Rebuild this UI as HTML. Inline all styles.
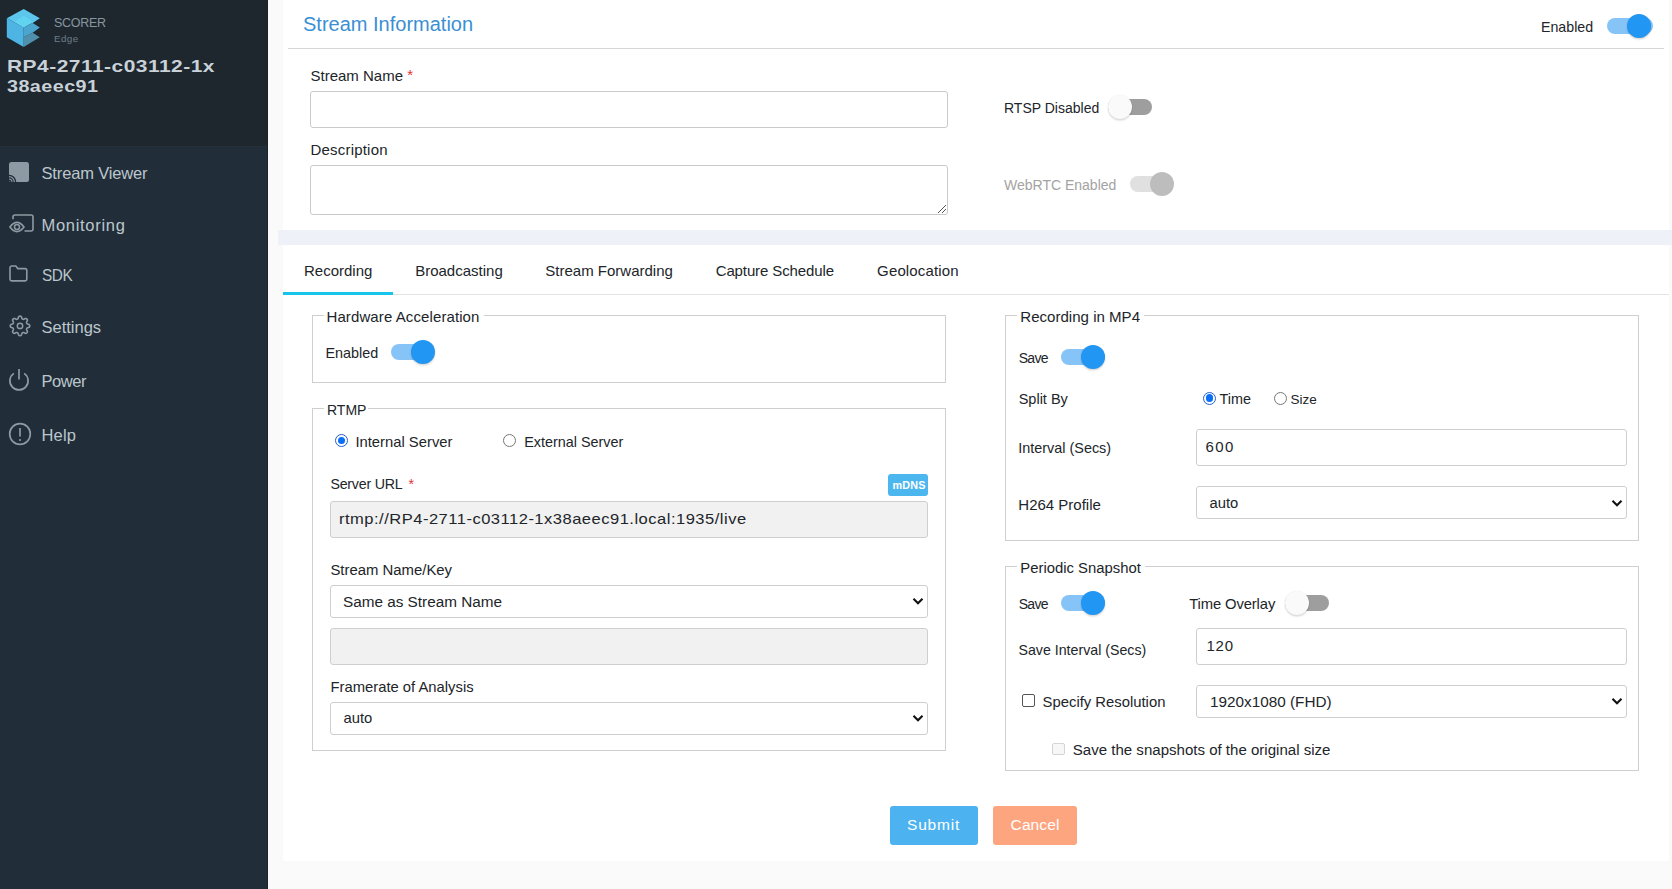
<!DOCTYPE html>
<html><head><meta charset="utf-8"><title>Stream Information</title>
<style>
html,body{margin:0;padding:0;width:1672px;height:889px;overflow:hidden;background:#fafafa;}
body{position:relative;font-family:"Liberation Sans",sans-serif;}
.t{position:absolute;white-space:nowrap;line-height:1;font-family:"Liberation Sans",sans-serif;}
.r{position:absolute;box-sizing:border-box;}
svg.r{overflow:visible;}
</style></head><body>
<div class="r" style="left:0px;top:0px;width:268px;height:889px;background:#212e39;"></div>
<div class="r" style="left:0px;top:0px;width:268px;height:146px;background:#1e272e;"></div>
<div class="r" style="left:0px;top:146px;width:268px;height:1px;background:#24313b;"></div>
<div class="r" style="left:267px;top:0px;width:1px;height:889px;background:#1a232a;"></div>
<svg class="r" style="left:6px;top:8px" width="36" height="40" viewBox="6 8 36 40">
<polygon points="23.7,9 39.8,18.3 32.7,23 23.7,27.6 6.8,18.3" fill="#5cc6ec"/>
<polygon points="6.8,18.3 23.7,27.6 23.7,47 6.8,37.3" fill="#4db4e4"/>
<polygon points="23.7,15.8 32.7,21.7 23.7,27.6 14.4,21.7" fill="#62d2f1"/>
<polygon points="23.7,27.6 32.7,23 39.8,27.6 32.7,32.7 23.7,37.3" fill="#4aa6cf"/>
<polygon points="23.7,37.3 32.7,32.7 39.8,37.3 23.7,47" fill="#4f90ad"/>
</svg>
<div class="t" style="left:54.00px;top:17.22px;font-size:12.5px;color:#8896a0;letter-spacing:-0.3px;">SCORER</div>
<div class="t" style="left:54.00px;top:33.50px;font-size:9.8px;color:#6f7e89;letter-spacing:0.4px;">Edge</div>
<div class="t" style="left:7.00px;top:57.91px;font-size:17px;color:#c9d2d9;font-weight:700;letter-spacing:0.4px;transform:scaleX(1.2316);transform-origin:0 0;">RP4-2711-c03112-1x</div>
<div class="t" style="left:7.00px;top:77.51px;font-size:17px;color:#c9d2d9;font-weight:700;letter-spacing:0.4px;transform:scaleX(1.16);transform-origin:0 0;">38aeec91</div>
<div class="t" style="left:41.50px;top:165.03px;font-size:16.5px;color:#bcc6cd;letter-spacing:-0.15px;">Stream Viewer</div>
<div class="t" style="left:41.50px;top:217.03px;font-size:16.5px;color:#bcc6cd;letter-spacing:0.7px;">Monitoring</div>
<div class="t" style="left:41.50px;top:267.03px;font-size:16.5px;color:#bcc6cd;letter-spacing:-0.5px;transform:scaleX(0.93);transform-origin:0 0;">SDK</div>
<div class="t" style="left:41.50px;top:319.03px;font-size:16.5px;color:#bcc6cd;">Settings</div>
<div class="t" style="left:41.50px;top:373.03px;font-size:16.5px;color:#bcc6cd;letter-spacing:-0.45px;">Power</div>
<div class="t" style="left:41.50px;top:427.03px;font-size:16.5px;color:#bcc6cd;letter-spacing:0.2px;">Help</div>
<svg class="r" style="left:0;top:150px" width="40" height="310" viewBox="0 150 40 310">
<rect x="9" y="162" width="20" height="20" rx="2.5" fill="#8e9aa3"/>
<path d="M9 175.4 a6.6 6.6 0 0 1 6.6 6.6" stroke="#212e39" stroke-width="1.35" fill="none"/>
<path d="M9 177.85 a4.15 4.15 0 0 1 4.15 4.15" stroke="#212e39" stroke-width="1.2" fill="none"/>
<path d="M9 180.1 a1.9 1.9 0 0 1 1.9 1.9" stroke="#212e39" stroke-width="1.15" fill="none"/>
<path d="M9 182 L9 173.8 A8.2 8.2 0 0 1 17.2 182 Z" fill="none"/>
<path d="M13 219.2 v-2.2 a2 2 0 0 1 2 -2 h16 a2 2 0 0 1 2 2 v12 a2 2 0 0 1 -2 2 h-6.5" stroke="#8e9aa3" stroke-width="1.6" fill="none"/>
<path d="M9.9 227 q7.05 -9.2 14.1 0 q-7.05 9.2 -14.1 0 z" stroke="#8e9aa3" stroke-width="1.6" fill="#212e39"/>
<circle cx="17" cy="227" r="2.5" stroke="#8e9aa3" stroke-width="1.5" fill="none"/>
<path d="M10 267.8 a1.8 1.8 0 0 1 1.8 -1.8 h4 l2 2.6 h7.2 a1.8 1.8 0 0 1 1.8 1.8 v8.7 a1.8 1.8 0 0 1 -1.8 1.8 h-13.2 a1.8 1.8 0 0 1 -1.8 -1.8 z" stroke="#8e9aa3" stroke-width="1.6" fill="none"/>
<path d="M20.00 316.15 L20.32 316.17 L20.63 316.22 L20.94 316.35 L21.23 316.58 L21.47 316.99 L21.66 317.56 L21.81 318.14 L21.97 318.56 L22.15 318.82 L22.35 318.98 L22.56 319.10 L22.77 319.20 L23.00 319.29 L23.23 319.35 L23.49 319.37 L23.80 319.32 L24.21 319.13 L24.72 318.83 L25.26 318.56 L25.72 318.44 L26.09 318.48 L26.39 318.61 L26.66 318.79 L26.89 319.01 L27.11 319.24 L27.29 319.51 L27.42 319.81 L27.46 320.18 L27.34 320.64 L27.07 321.18 L26.77 321.69 L26.58 322.10 L26.53 322.41 L26.55 322.67 L26.61 322.90 L26.70 323.13 L26.80 323.34 L26.92 323.55 L27.08 323.75 L27.34 323.93 L27.76 324.09 L28.34 324.24 L28.91 324.43 L29.32 324.67 L29.55 324.96 L29.68 325.27 L29.73 325.58 L29.75 325.90 L29.73 326.22 L29.68 326.53 L29.55 326.84 L29.32 327.13 L28.91 327.37 L28.34 327.56 L27.76 327.71 L27.34 327.87 L27.08 328.05 L26.92 328.25 L26.80 328.46 L26.70 328.67 L26.61 328.90 L26.55 329.13 L26.53 329.39 L26.58 329.70 L26.77 330.11 L27.07 330.62 L27.34 331.16 L27.46 331.62 L27.42 331.99 L27.29 332.29 L27.11 332.56 L26.89 332.79 L26.66 333.01 L26.39 333.19 L26.09 333.32 L25.72 333.36 L25.26 333.24 L24.72 332.97 L24.21 332.67 L23.80 332.48 L23.49 332.43 L23.23 332.45 L23.00 332.51 L22.77 332.60 L22.56 332.70 L22.35 332.82 L22.15 332.98 L21.97 333.24 L21.81 333.66 L21.66 334.24 L21.47 334.81 L21.23 335.22 L20.94 335.45 L20.63 335.58 L20.32 335.63 L20.00 335.65 L19.68 335.63 L19.37 335.58 L19.06 335.45 L18.77 335.22 L18.53 334.81 L18.34 334.24 L18.19 333.66 L18.03 333.24 L17.85 332.98 L17.65 332.82 L17.44 332.70 L17.23 332.60 L17.00 332.51 L16.77 332.45 L16.51 332.43 L16.20 332.48 L15.79 332.67 L15.28 332.97 L14.74 333.24 L14.28 333.36 L13.91 333.32 L13.61 333.19 L13.34 333.01 L13.11 332.79 L12.89 332.56 L12.71 332.29 L12.58 331.99 L12.54 331.62 L12.66 331.16 L12.93 330.62 L13.23 330.11 L13.42 329.70 L13.47 329.39 L13.45 329.13 L13.39 328.90 L13.30 328.67 L13.20 328.46 L13.08 328.25 L12.92 328.05 L12.66 327.87 L12.24 327.71 L11.66 327.56 L11.09 327.37 L10.68 327.13 L10.45 326.84 L10.32 326.53 L10.27 326.22 L10.25 325.90 L10.27 325.58 L10.32 325.27 L10.45 324.96 L10.68 324.67 L11.09 324.43 L11.66 324.24 L12.24 324.09 L12.66 323.93 L12.92 323.75 L13.08 323.55 L13.20 323.34 L13.30 323.13 L13.39 322.90 L13.45 322.67 L13.47 322.41 L13.42 322.10 L13.23 321.69 L12.93 321.18 L12.66 320.64 L12.54 320.18 L12.58 319.81 L12.71 319.51 L12.89 319.24 L13.11 319.01 L13.34 318.79 L13.61 318.61 L13.91 318.48 L14.28 318.44 L14.74 318.56 L15.28 318.83 L15.79 319.13 L16.20 319.32 L16.51 319.37 L16.77 319.35 L17.00 319.29 L17.23 319.20 L17.44 319.10 L17.65 318.98 L17.85 318.82 L18.03 318.56 L18.19 318.14 L18.34 317.56 L18.53 316.99 L18.77 316.58 L19.06 316.35 L19.37 316.22 L19.68 316.17 Z" stroke="#8e9aa3" stroke-width="1.6" fill="none" stroke-linejoin="round"/>
<circle cx="20" cy="325.9" r="2.7" stroke="#8e9aa3" stroke-width="1.45" fill="none"/>
<path d="M13.8 373.4 a9.1 9.1 0 1 0 10.4 0" stroke="#8e9aa3" stroke-width="1.7" fill="none"/>
<line x1="19" y1="369" x2="19" y2="379.5" stroke="#8e9aa3" stroke-width="1.7"/>
<circle cx="20" cy="434" r="10.3" stroke="#8e9aa3" stroke-width="1.7" fill="none"/>
<line x1="20" y1="428" x2="20" y2="436.5" stroke="#8e9aa3" stroke-width="1.7"/>
<circle cx="20" cy="440" r="1.1" fill="#8e9aa3"/>
</svg>
<div class="r" style="left:268px;top:0px;width:1404px;height:889px;background:#fafafa;"></div>
<div class="r" style="left:283px;top:0px;width:1386px;height:861px;background:#ffffff;"></div>
<div class="t" style="left:303.00px;top:13.77px;font-size:20px;color:#3b8fd3;">Stream Information</div>
<div class="r" style="left:288px;top:48px;width:1376px;height:1px;background:#d6d6d6;"></div>
<div class="t" style="left:1541.00px;top:19.98px;font-size:14.2px;color:#212529;">Enabled</div>
<div class="r" style="left:1607px;top:18px;width:46px;height:16px;background:#86c4f7;border-radius:8.0px;"></div>
<div class="r" style="left:1627.0px;top:13.8px;width:24px;height:24px;background:#2196f3;border-radius:12.0px;box-shadow:0 1.5px 2px rgba(0,0,0,0.15),0 0 1px rgba(0,0,0,0.10);"></div>
<div class="t" style="left:310.50px;top:68.20px;font-size:15px;color:#212529;">Stream Name <span style="color:#e3342f;position:relative;top:-1.5px">*</span></div>
<div class="r" style="left:310px;top:91px;width:638px;height:37px;background:#fff;border:1px solid #cacaca;box-sizing:border-box;border-radius:3px;"></div>
<div class="t" style="left:310.50px;top:142.30px;font-size:15px;color:#212529;letter-spacing:0.2px;">Description</div>
<div class="r" style="left:310px;top:165px;width:638px;height:50px;background:#fff;border:1px solid #cacaca;box-sizing:border-box;border-radius:3px;"></div>
<svg class="r" style="left:937px;top:204px" width="10" height="10"><path d="M1 9 L9 1 M5 9 L9 5" stroke="#555" stroke-width="1"/></svg>
<div class="t" style="left:1004.00px;top:101.25px;font-size:14px;color:#212529;">RTSP Disabled</div>
<div class="r" style="left:1108px;top:99px;width:44px;height:16px;background:#9e9e9e;border-radius:8.0px;"></div>
<div class="r" style="left:1107.6px;top:95.0px;width:24px;height:24px;background:#fafafa;border-radius:12.0px;box-shadow:0 1.5px 2px rgba(0,0,0,0.15),0 0 1px rgba(0,0,0,0.10);"></div>
<div class="t" style="left:1004.00px;top:177.75px;font-size:14px;color:#a3a3a3;">WebRTC Enabled</div>
<div class="r" style="left:1130px;top:176px;width:42px;height:16px;background:#e0e0e0;border-radius:8.0px;"></div>
<div class="r" style="left:1150.0px;top:172.0px;width:24px;height:24px;background:#bdbdbd;border-radius:12.0px;"></div>
<div class="r" style="left:278px;top:230px;width:1394px;height:15px;background:#eef2f8;"></div>
<div class="t" style="left:304.00px;top:263.30px;font-size:15px;color:#212529;">Recording</div>
<div class="t" style="left:415.20px;top:263.30px;font-size:15px;color:#212529;">Broadcasting</div>
<div class="t" style="left:545.30px;top:263.30px;font-size:15px;color:#212529;">Stream Forwarding</div>
<div class="t" style="left:715.70px;top:263.30px;font-size:15px;color:#212529;letter-spacing:-0.12px;">Capture Schedule</div>
<div class="t" style="left:877.10px;top:263.30px;font-size:15px;color:#212529;letter-spacing:0.14px;">Geolocation</div>
<div class="r" style="left:283px;top:294px;width:1386px;height:1px;background:#e3e3e3;"></div>
<div class="r" style="left:283px;top:292px;width:110px;height:3px;background:#17c5ea;"></div>
<div class="r" style="left:312px;top:315px;width:634px;height:68px;background:none;border:1px solid #cfcfcf;box-sizing:border-box;"></div>
<div class="r" style="left:324px;top:312px;width:160px;height:6px;background:#fff;"></div>
<div class="t" style="left:326.50px;top:309.20px;font-size:15px;color:#212529;letter-spacing:0.1px;">Hardware Acceleration</div>
<div class="t" style="left:325.50px;top:345.61px;font-size:14.4px;color:#212529;">Enabled</div>
<div class="r" style="left:391px;top:344px;width:43px;height:16px;background:#86c4f7;border-radius:8.0px;"></div>
<div class="r" style="left:411.0px;top:340.0px;width:24px;height:24px;background:#2196f3;border-radius:12.0px;box-shadow:0 1.5px 2px rgba(0,0,0,0.15),0 0 1px rgba(0,0,0,0.10);"></div>
<div class="r" style="left:312px;top:408px;width:634px;height:343px;background:none;border:1px solid #cfcfcf;box-sizing:border-box;"></div>
<div class="r" style="left:324px;top:405px;width:44px;height:6px;background:#fff;"></div>
<div class="t" style="left:327.00px;top:402.85px;font-size:14px;color:#212529;">RTMP</div>
<div class="r" style="left:334.9px;top:433.9px;width:13px;height:13px;background:#fff;border:1.5px solid #2460c4;box-sizing:border-box;border-radius:6.5px;"></div>
<div class="r" style="left:337.59999999999997px;top:436.59999999999997px;width:7.6px;height:7.6px;background:#0b6ef6;border-radius:3.8px;"></div>
<div class="t" style="left:355.40px;top:435.07px;font-size:14.8px;color:#212529;">Internal Server</div>
<div class="r" style="left:502.9px;top:433.9px;width:13px;height:13px;background:#fff;border:1px solid #767676;box-sizing:border-box;border-radius:6.5px;"></div>
<div class="t" style="left:524.20px;top:434.61px;font-size:14.4px;color:#212529;">External Server</div>
<div class="t" style="left:330.40px;top:476.98px;font-size:14.2px;color:#212529;letter-spacing:-0.2px;">Server URL<span style="color:#e3342f;position:relative;top:0px;margin-left:6px">*</span></div>
<div class="r" style="left:888px;top:474px;width:40px;height:22px;background:#4cb6ef;border-radius:3px;"></div>
<div class="t" style="left:892.50px;top:479.76px;font-size:10.8px;color:#fff;font-weight:700;letter-spacing:0.15px;">mDNS</div>
<div class="r" style="left:330px;top:501px;width:598px;height:37px;background:#f1f1f1;border:1px solid #cfcfcf;box-sizing:border-box;border-radius:3px;"></div>
<div class="t" style="left:339.00px;top:511.30px;font-size:15px;color:#212529;letter-spacing:0.45px;transform:scaleX(1.1015);transform-origin:0 0;">rtmp://RP4-2711-c03112-1x38aeec91.local:1935/live</div>
<div class="t" style="left:330.40px;top:562.69px;font-size:14.9px;color:#212529;">Stream Name/Key</div>
<div class="r" style="left:330px;top:585px;width:598px;height:33px;background:#fff;border:1px solid #cfcfcf;box-sizing:border-box;border-radius:3px;"></div>
<div class="t" style="left:343.00px;top:594.45px;font-size:15.3px;color:#212529;">Same as Stream Name</div>
<svg class="r" style="left:912px;top:596.5px" width="12" height="9"><path d="M1.5 1.8 L6 6.3 L10.5 1.8" stroke="#111" stroke-width="2.1" fill="none"/></svg>
<div class="r" style="left:330px;top:628px;width:598px;height:37px;background:#f1f1f1;border:1px solid #cfcfcf;box-sizing:border-box;border-radius:3px;"></div>
<div class="t" style="left:330.50px;top:679.57px;font-size:14.8px;color:#212529;">Framerate of Analysis</div>
<div class="r" style="left:330px;top:702px;width:598px;height:33px;background:#fff;border:1px solid #cfcfcf;box-sizing:border-box;border-radius:3px;"></div>
<div class="t" style="left:343.50px;top:711.07px;font-size:14.8px;color:#212529;">auto</div>
<svg class="r" style="left:912px;top:713.5px" width="12" height="9"><path d="M1.5 1.8 L6 6.3 L10.5 1.8" stroke="#111" stroke-width="2.1" fill="none"/></svg>
<div class="r" style="left:1005px;top:315px;width:634px;height:226px;background:none;border:1px solid #cfcfcf;box-sizing:border-box;"></div>
<div class="r" style="left:1017px;top:312px;width:127px;height:6px;background:#fff;"></div>
<div class="t" style="left:1020.30px;top:309.34px;font-size:15.07px;color:#212529;">Recording in MP4</div>
<div class="t" style="left:1018.70px;top:351.35px;font-size:14px;color:#212529;letter-spacing:-0.7px;">Save</div>
<div class="r" style="left:1061px;top:349px;width:44px;height:16px;background:#86c4f7;border-radius:8.0px;"></div>
<div class="r" style="left:1081.0px;top:345.0px;width:24px;height:24px;background:#2196f3;border-radius:12.0px;box-shadow:0 1.5px 2px rgba(0,0,0,0.15),0 0 1px rgba(0,0,0,0.10);"></div>
<div class="t" style="left:1018.70px;top:391.73px;font-size:14.5px;color:#212529;">Split By</div>
<div class="r" style="left:1202.8px;top:391.5px;width:13px;height:13px;background:#fff;border:1.5px solid #2460c4;box-sizing:border-box;border-radius:6.5px;"></div>
<div class="r" style="left:1205.5px;top:394.2px;width:7.6px;height:7.6px;background:#0b6ef6;border-radius:3.8px;"></div>
<div class="t" style="left:1219.50px;top:391.81px;font-size:14.4px;color:#212529;">Time</div>
<div class="r" style="left:1273.8px;top:391.5px;width:13px;height:13px;background:#fff;border:1px solid #767676;box-sizing:border-box;border-radius:6.5px;"></div>
<div class="t" style="left:1290.50px;top:392.57px;font-size:13.5px;color:#212529;">Size</div>
<div class="t" style="left:1018.30px;top:440.81px;font-size:14.4px;color:#212529;">Interval (Secs)</div>
<div class="r" style="left:1196px;top:429px;width:431px;height:37px;background:#fff;border:1px solid #cfcfcf;box-sizing:border-box;border-radius:3px;"></div>
<div class="t" style="left:1205.50px;top:439.40px;font-size:15px;color:#212529;letter-spacing:1.35px;">600</div>
<div class="t" style="left:1018.30px;top:497.40px;font-size:15px;color:#212529;">H264 Profile</div>
<div class="r" style="left:1196px;top:486px;width:431px;height:33px;background:#fff;border:1px solid #cfcfcf;box-sizing:border-box;border-radius:3px;"></div>
<div class="t" style="left:1209.60px;top:495.51px;font-size:14.75px;color:#212529;">auto</div>
<svg class="r" style="left:1611px;top:499px" width="12" height="9"><path d="M1.5 1.8 L6 6.3 L10.5 1.8" stroke="#111" stroke-width="2.1" fill="none"/></svg>
<div class="r" style="left:1005px;top:566px;width:634px;height:205px;background:none;border:1px solid #cfcfcf;box-sizing:border-box;"></div>
<div class="r" style="left:1017px;top:563px;width:128px;height:6px;background:#fff;"></div>
<div class="t" style="left:1020.30px;top:560.82px;font-size:14.86px;color:#212529;">Periodic Snapshot</div>
<div class="t" style="left:1018.70px;top:597.15px;font-size:14px;color:#212529;letter-spacing:-0.7px;">Save</div>
<div class="r" style="left:1061px;top:595px;width:44px;height:16px;background:#86c4f7;border-radius:8.0px;"></div>
<div class="r" style="left:1081.0px;top:590.7px;width:24px;height:24px;background:#2196f3;border-radius:12.0px;box-shadow:0 1.5px 2px rgba(0,0,0,0.15),0 0 1px rgba(0,0,0,0.10);"></div>
<div class="t" style="left:1189.20px;top:597.47px;font-size:14.8px;color:#212529;letter-spacing:-0.12px;">Time Overlay</div>
<div class="r" style="left:1285px;top:595px;width:44px;height:16px;background:#9e9e9e;border-radius:8.0px;"></div>
<div class="r" style="left:1284.7px;top:590.7px;width:24px;height:24px;background:#fafafa;border-radius:12.0px;box-shadow:0 1.5px 2px rgba(0,0,0,0.15),0 0 1px rgba(0,0,0,0.10);"></div>
<div class="t" style="left:1018.50px;top:642.68px;font-size:14.2px;color:#212529;">Save Interval (Secs)</div>
<div class="r" style="left:1196px;top:628px;width:431px;height:37px;background:#fff;border:1px solid #cfcfcf;box-sizing:border-box;border-radius:3px;"></div>
<div class="t" style="left:1206.40px;top:637.90px;font-size:15px;color:#212529;letter-spacing:0.8px;">120</div>
<div class="r" style="left:1022px;top:694.3px;width:13px;height:13px;background:#fff;border:1px solid #555;box-sizing:border-box;border-radius:2px;"></div>
<div class="t" style="left:1042.60px;top:695.45px;font-size:14.83px;color:#212529;">Specify Resolution</div>
<div class="r" style="left:1196px;top:685px;width:431px;height:33px;background:#fff;border:1px solid #cfcfcf;box-sizing:border-box;border-radius:3px;"></div>
<div class="t" style="left:1210.00px;top:694.05px;font-size:15.3px;color:#212529;">1920x1080 (FHD)</div>
<svg class="r" style="left:1611px;top:697px" width="12" height="9"><path d="M1.5 1.8 L6 6.3 L10.5 1.8" stroke="#111" stroke-width="2.1" fill="none"/></svg>
<div class="r" style="left:1052px;top:742.8px;width:13px;height:12px;background:#f7f7f7;border:1px solid #d5d5d5;box-sizing:border-box;border-radius:2px;"></div>
<div class="t" style="left:1072.80px;top:742.26px;font-size:15.05px;color:#212529;">Save the snapshots of the original size</div>
<div class="r" style="left:890px;top:806px;width:88px;height:39px;background:#4cb3f0;border-radius:3px;"></div>
<div class="t" style="left:907.00px;top:816.78px;font-size:15.5px;color:#fff;letter-spacing:0.8px;">Submit</div>
<div class="r" style="left:993px;top:806px;width:84px;height:39px;background:#fca57f;border-radius:3px;"></div>
<div class="t" style="left:1010.60px;top:816.88px;font-size:15.5px;color:#fff;letter-spacing:0.1px;">Cancel</div>
</body></html>
